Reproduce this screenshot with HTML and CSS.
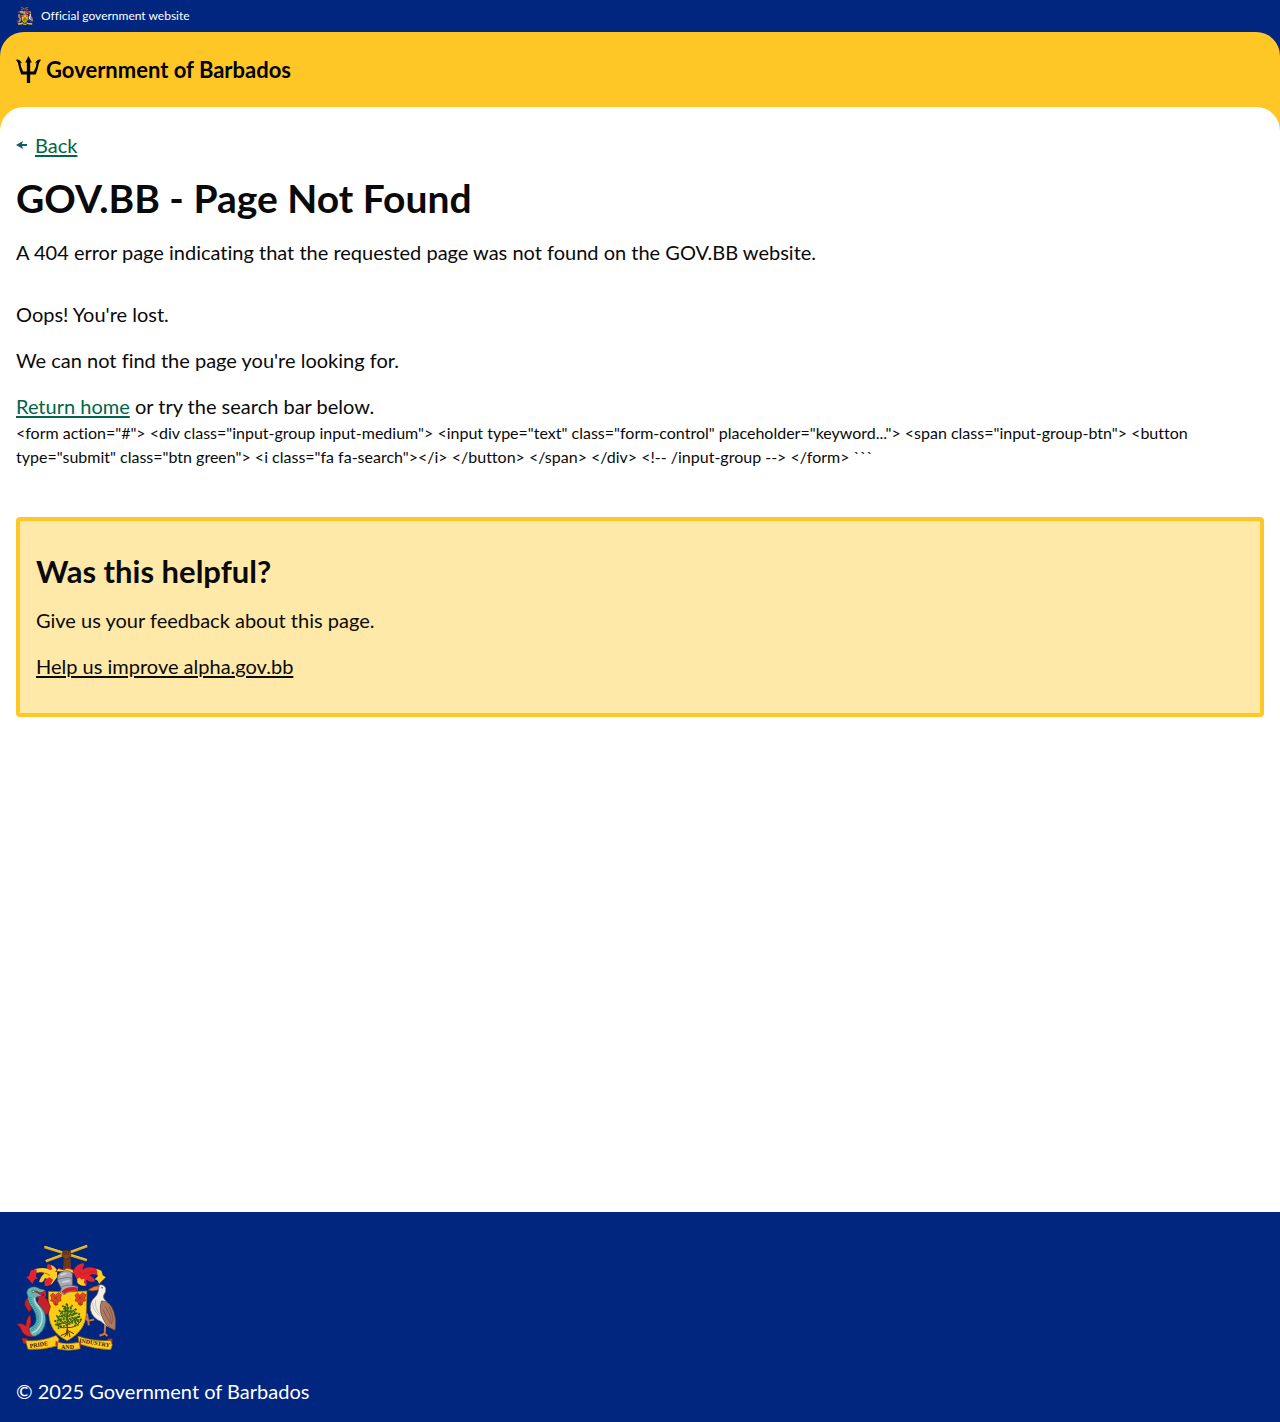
FILE: index.html
```html
<!DOCTYPE html>
<html lang="en">
<head>
  <meta charset="utf-8">
  <meta name="viewport" content="width=device-width, initial-scale=1">
  <title>GOV.BB - Page Not Found</title>
  <link rel="stylesheet" href="styles.css">
</head>
<body>
  <div class="official">
    <svg class="official-crest" viewBox="48 42 302 324" aria-hidden="true"><use href="#crest"/></svg>
    <span>Official government website</span>
  </div>

  <div class="header-wrap">
    <header class="header">
      <a class="brand" href="#">
        <svg class="trident" viewBox="0 0 76 82" aria-hidden="true">
          <path d="M38 0l10 20h-5v27h11q8-13 9-27l-5 3Q63 9 76 11L70 21Q66 42 60 56H43v26H33V56H16Q10 42 6 21L0 11Q13 9 18 23l-5-3q1 14 9 27h11V20h-5z"/>
        </svg>
        <span>Government of Barbados</span>
      </a>
    </header>
  </div>

  <div class="main-wrap">
    <main class="main">
      <a class="back" href="#">
        <svg class="back-arrow" viewBox="0 0 12 10" aria-hidden="true"><path d="M0 5l7-4-1 3h5v2H6l1 3z"/></svg>
        <span class="back-text">Back</span>
      </a>
      <h1 class="title">GOV.BB - Page Not Found</h1>
      <p class="lead">A 404 error page indicating that the requested page was not found on the GOV.BB website.</p>
      <div class="content">
        <p>Oops! You're lost.</p>
        <p>We can not find the page you're looking for.</p>
        <p><a class="link" href="#">Return home</a> or try the search bar below.</p>
      </div>
      <div class="markup">&lt;form action="#"&gt; &lt;div class="input-group input-medium"&gt; &lt;input type="text" class="form-control" placeholder="keyword..."&gt; &lt;span class="input-group-btn"&gt; &lt;button type="submit" class="btn green"&gt; &lt;i class="fa fa-search"&gt;&lt;/i&gt; &lt;/button&gt; &lt;/span&gt; &lt;/div&gt; &lt;!-- /input-group --&gt; &lt;/form&gt; ```</div>
      <section class="feedback">
        <h2 class="feedback-title">Was this helpful?</h2>
        <p>Give us your feedback about this page.</p>
        <p><a class="feedback-link" href="#">Help us improve alpha.gov.bb</a></p>
      </section>
    </main>
  </div>

  <footer class="footer">
    <svg class="footer-crest" viewBox="48 42 302 324" role="img" aria-label="Coat of arms of Barbados">
      <g id="crest" stroke-linejoin="round">
        <!-- crossed sugar canes and arm -->
        <path d="M190 118L193 80l20 0 1 38z" fill="#6b3a1e"/>
        <path d="M134 50L262 90M138 93L263 47" fill="none" stroke="#dba91f" stroke-width="8"/>
        <path d="M134 48L262 88M138 91L263 45" fill="none" stroke="#f0c832" stroke-width="3"/>
        <path d="M187 76l3-14 8-3 14 3 2 12-7 12-13 1z" fill="#7a4424" stroke="#3d210f" stroke-width="2"/>
        <path d="M193 64v10M199 62v11M206 63v10" stroke="#3d210f" stroke-width="2"/>
        <!-- mantling -->
        <path d="M172 120q-10-16-27-17 12 8 8 16-18-10-44-3l-11 6 13 7q18-7 22 2-12 10-15 25 13 3 17-12 10 0 12 10l-9 12q18 0 22-9l12-16z" fill="#ffce1f"/>
        <path d="M111 118l-18 2-6 18-8 2 9 10 10 12q4-18 16-16l-6-8zM158 118l-5-14-9-2q-6 6 2 16zM134 151l14-10 12 8-8 16-17 3z" fill="#e5232e"/>
        <path d="M222 122q5-20 30-24l2 8q-7 8-5 12 22-14 50 2l8 11-8 5q-20-8-30 0 16 5 17 18-17 4-26-6l2 16q-18 3-27-10l-10-20z" fill="#e5232e"/>
        <path d="M291 116l15 6 4 13 9 6-14 14-6 7q-4-16-14-14l10-10zM232 149l7-7 7 6 9-2-2 12 7 8q-13 3-20-3-10-2-6-14z" fill="#ffce1f"/>
        <path d="M108 128q26-4 43 8M250 132q20-11 44-7M237 122l11 13" fill="none" stroke="#a62a1a" stroke-width="2"/>
        <path d="M168 124l8-9 16 4 10-5 17 4 5 11-27-4z" fill="#ffce1f" stroke="#b92b20" stroke-width="3"/>
        <!-- shield -->
        <path d="M146 184q52 3 116-1-1 40-2 70-2 50-57 80-53-24-56-80z" fill="#ffcb13" stroke="#a87a10" stroke-width="2"/>
        <g id="flower" fill="#e04a22" stroke="#98250f" stroke-width="2">
          <path d="M152 196l8-7 7 7 8-8 10 6-3 10 2 8-9 3-1 9-10-1-4-8-8-3 4-8z"/>
          <path d="M160 198l16 12M176 197l-15 13M168 213v13M161 221l7 6 7-5" fill="none"/>
        </g>
        <use href="#flower" x="74"/>
        <!-- helmet -->
        <path d="M174 136q11-17 33-14l11 6v38l17 4-2 14q-25-2-40 10l-12-7 4-12-12-23z" fill="#a9abb2" stroke="#5b5e66" stroke-width="2"/>
        <path d="M172 148l34-7 12 5M183 172q20-12 50-4" fill="none" stroke="#5b5e66" stroke-width="2"/>
        <path d="M182 135l18-6M188 156l22-4" fill="none" stroke="#d4d6dc" stroke-width="5"/>
        <path d="M185 184q20-18 49-11l-1 10q-24-3-39 9z" fill="#d31f2a"/>
        <!-- bearded fig tree -->
        <path d="M203 318V222M204 288l-30-23M203 284l36-25M203 264l-24-23M205 260l23-24M203 246l-11-19M204 291q-18 9-36-8M205 293q20 3 39-19" fill="none" stroke="#5c3a15" stroke-width="3"/>
        <path d="M204 293l-4 17-17 8M204 302l19 10M204 307l-9 14M207 305l4 17" fill="none" stroke="#4a2b10" stroke-width="3"/>
        <g fill="none" stroke="#2e6b1c" stroke-width="5" stroke-dasharray="6 3">
          <path d="M202 220l-8 16 20-4-30 15 38-5-48 20 58-12-66 24 76-14-74 25 80-17-74 28"/>
          <path d="M188 226l10 20M218 225l-10 25M178 240l12 24M230 236l-13 27M170 256l14 21M240 250l-14 28M164 272l18 14M246 268l-22 17M203 222v54M172 286l15 4M224 289l13-4"/>
        </g>
        <!-- dolphin -->
        <path d="M116 202l12-6 14 12 10 22-7 22-22 4 5-20-16-17zM84 203q-12 7-9 24l12 20 8-10z" fill="#c81f2b" stroke="#751219" stroke-width="2"/>
        <path d="M84 199q-8-13 1-23 18-13 36 1 14 0 15 7l-20 6 11 8-18 4q-5 9 9 23 22 21 20 49-5 34-31 45-19 5-33-10-12-11-3-25 9 12 20 9 17-6 18-26 0-15-9-29-19-22-16-39z" fill="#63b5b7" stroke="#1c5960" stroke-width="2"/>
        <path d="M104 204q-1 13 12 27 16 20 9 47-8 24-28 32" fill="none" stroke="#c5ddd5" stroke-width="4"/>
        <path d="M92 202q-2 15 11 31 15 22 9 44-7 20-23 27" fill="none" stroke="#267b88" stroke-width="8" stroke-dasharray="2 4"/>
        <path d="M106 183l20 10 9-9 1 13-10 8-14-5" fill="none" stroke="#ca202c" stroke-width="6"/>
        <circle cx="100" cy="184" r="4" fill="#f6dc60" stroke="#17333b" stroke-width="2"/>
        <path d="M51 282q18-3 27 7 1-26 13-34 6 21-3 39-5 14 12 27-22 2-33-14-5-14-16-25z" fill="#d62430" stroke="#791318" stroke-width="2"/>
        <!-- pelican -->
        <path d="M298 165q16-4 21 10 2 10-6 20-4 9 7 18 25 23 27 62 2 12-4 23-24-7-38-23-26-10-32-34-4-24 12-38 11-10 12-23l-6-8z" fill="#f4efe5" stroke="#736759" stroke-width="2"/>
        <path d="M300 167l-5 13q-18 5-29 0 17-14 34-13z" fill="#e97c32" stroke="#8e351b" stroke-width="2"/>
        <path d="M306 213q26-2 38 33 9 28 3 56-27-11-36-35-14-25-5-54z" fill="#ad7a62" stroke="#5b382a" stroke-width="2"/>
        <path d="M318 229q17 25 19 54M311 239q10 24 22 41M329 228q12 24 12 50" fill="none" stroke="#734938" stroke-width="2"/>
        <path d="M279 218q1 26 23 39M288 210q-3 28 16 44" fill="none" stroke="#b1aaa2" stroke-width="2"/>
        <circle cx="308" cy="173" r="2" fill="#111"/>
        <path d="M284 269l-18 4-4-22M266 273l-9-10M266 273l2 14M317 284l-1 28-16 6M316 311l8 8" fill="none" stroke="#c87945" stroke-width="6"/>
        <!-- scroll -->
        <path d="M66 325l17 2 2 17-15-3zM324 327l15-1v13l-13 5z" fill="#c62820"/>
        <path d="M77 333q48 3 92-16l9 11-5 20q-42 14-89 11zM235 319q47 17 99 13l5 14-5 14q-49-1-95-17z" fill="#ffcc21" stroke="#946511" stroke-width="2"/>
        <path d="M168 333l11 6 0 13-12-5zM231 341l12-6 2 12-13 6z" fill="#c62820"/>
        <path d="M174 338q29 7 65 0l3 19q-34 9-69 1z" fill="#ffcc21" stroke="#946511" stroke-width="2"/>
      </g>
      <g class="motto">
        <text transform="translate(90 355) rotate(-9)">PRIDE</text>
        <text x="184" y="358">AND</text>
        <text transform="translate(238 338) rotate(9)">INDUSTRY</text>
      </g>
    </svg>
    <p>© 2025 Government of Barbados</p>
  </footer>
</body>
</html>
```
FILE: styles.css
```css
* {
  box-sizing: border-box;
}

body {
  margin: 0;
  min-height: 100vh;
  display: flex;
  flex-direction: column;
  background: #fff;
  color: #0a0a0a;
  font-family: Lato, "Open Sans", sans-serif;
  font-size: 20px;
  font-variant-ligatures: none;
  line-height: 30px;
}

h1,
h2,
p {
  margin: 0;
}

.official {
  display: flex;
  align-items: center;
  gap: 8px;
  height: 32px;
  padding: 0 16px;
  background: #00267f;
  color: #fff;
  font-size: 12px;
  line-height: 16px;
}

.official-crest {
  width: 17px;
  height: 18px;
}

.header-wrap {
  background: #00267f;
}

.header {
  padding: 24px 16px;
  background: #ffc726;
  border-radius: 24px 24px 0 0;
}

.brand {
  display: flex;
  align-items: center;
  gap: 5px;
  color: #000;
  font-size: 22px;
  font-weight: 700;
  line-height: 27px;
  text-decoration: none;
}

.trident {
  width: 25px;
  height: 27px;
}

.main-wrap {
  flex: 1;
  display: flex;
  background: #ffc726;
}

.main {
  flex: 1;
  padding: 24px 16px 32px;
  background: #fff;
  border-radius: 24px 24px 0 0;
}

.back {
  display: flex;
  align-items: center;
  gap: 7px;
  width: fit-content;
  color: #00654a;
  line-height: 28px;
  text-decoration: none;
}

.back-arrow {
  width: 12px;
  height: 10px;
  fill: #0e5f64;
}

.back-text,
.link,
.feedback-link {
  text-decoration: underline;
  text-decoration-thickness: 2px;
  text-underline-offset: 2px;
}

.link {
  color: #00654a;
}

.title {
  margin-top: 16px;
  font-size: 39px;
  font-weight: 700;
  line-height: 46px;
}

.lead {
  margin-top: 16px;
}

.content {
  display: grid;
  gap: 16px;
  margin-top: 32px;
}

.markup {
  font-size: 16px;
  line-height: 24px;
}

.feedback {
  display: grid;
  gap: 16px;
  margin-top: 48px;
  padding: 32px 16px;
  background: #ffe9a8;
  border: 4px solid #ffc726;
  border-radius: 4px;
}

.feedback-title {
  font-size: 31px;
  font-weight: 700;
  line-height: 36px;
}

.feedback-link {
  color: #0a0a0a;
}

.footer {
  display: grid;
  gap: 24px;
  padding: 32px 16px 16px;
  background: #00267f;
  color: #fff;
}

.footer-crest {
  width: 100px;
  height: 108px;
}

.motto {
  fill: #2b1c08;
  font-family: "Liberation Serif", serif;
  font-size: 18px;
  font-weight: 700;
}
```
